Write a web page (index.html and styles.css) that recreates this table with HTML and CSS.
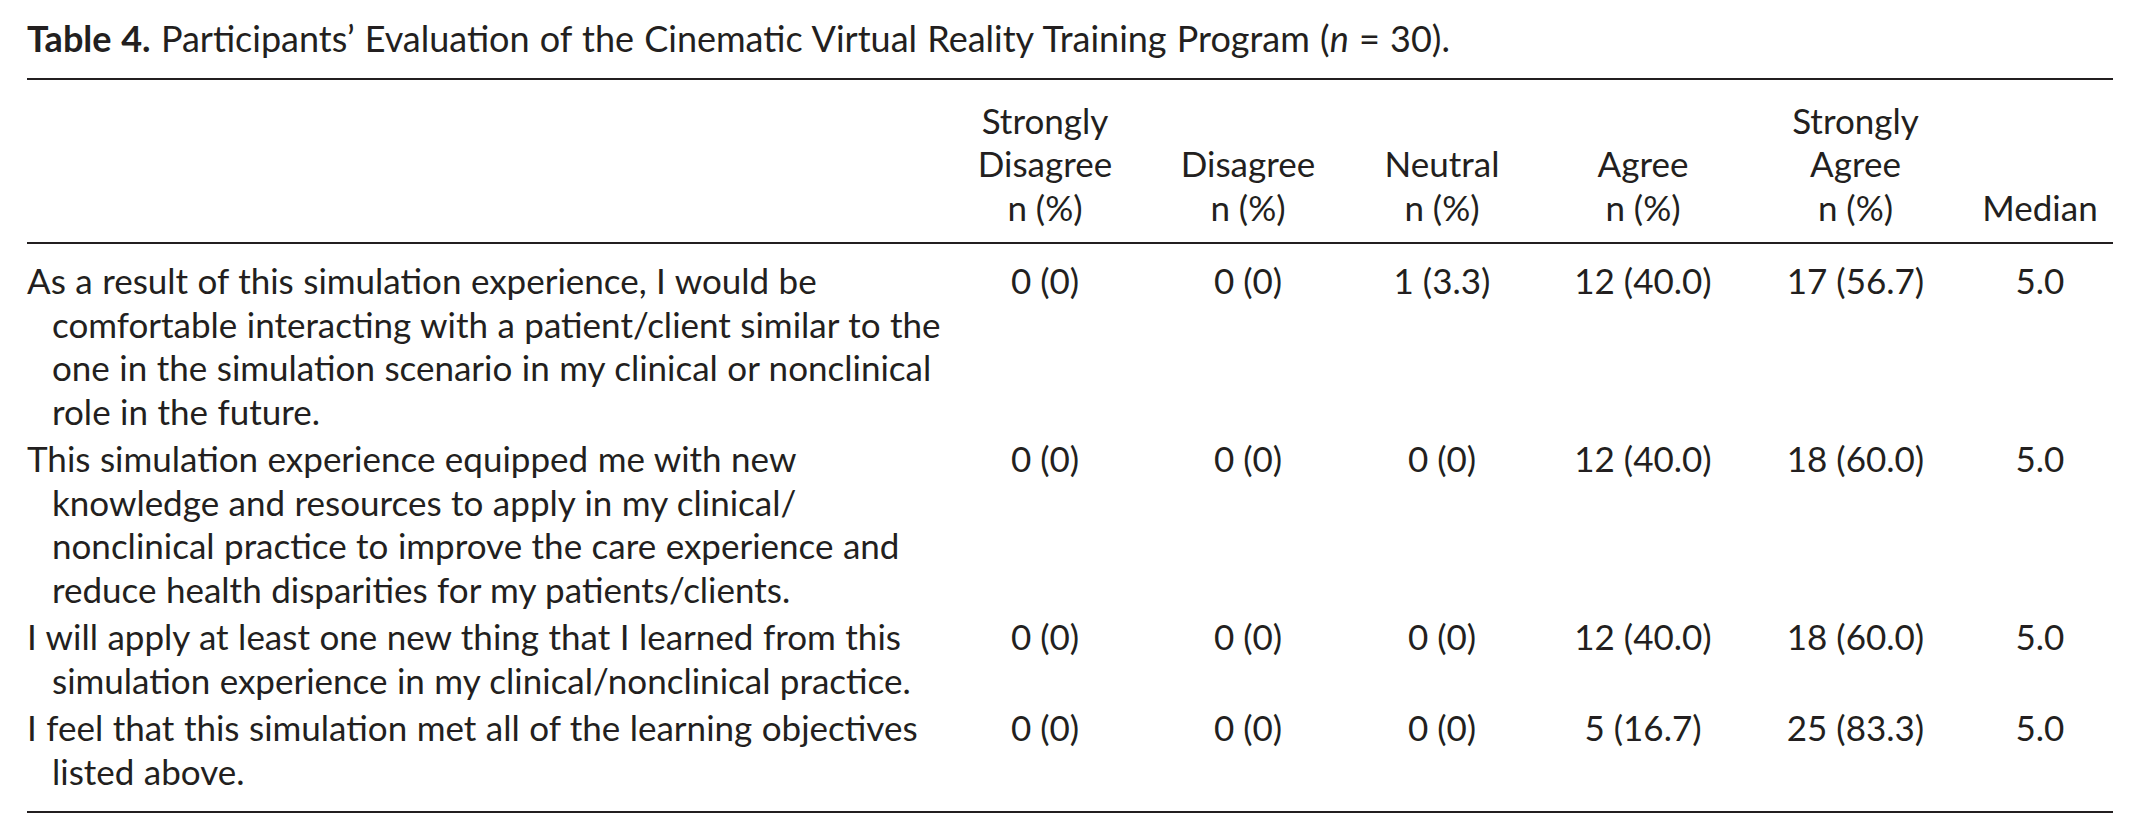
FILE: index.html
```html
<!DOCTYPE html>
<html lang="en">
<head>
<meta charset="utf-8">
<title>Table 4</title>
<link rel="stylesheet" href="styles.css">
</head>
<body>
<div class="page">
  <div class="caption"><span class="label">Table 4.</span> Participants’ Evaluation of the Cinematic Virtual Reality Training Program (<i>n</i> = 30).</div>
  <table class="data">
    <colgroup>
      <col class="c-item">
      <col class="c-sd">
      <col class="c-d">
      <col class="c-n">
      <col class="c-a">
      <col class="c-sa">
      <col class="c-m">
    </colgroup>
    <thead>
      <tr>
        <th class="item"></th>
        <th>Strongly<br>Disagree<br>n (%)</th>
        <th>Disagree<br>n (%)</th>
        <th>Neutral<br>n (%)</th>
        <th>Agree<br>n (%)</th>
        <th>Strongly<br>Agree<br>n (%)</th>
        <th>Median</th>
      </tr>
    </thead>
    <tbody>
      <tr>
        <td class="item">As a result of this simulation experience, I would be<br>comfortable interacting with a patient/client similar to the<br>one in the simulation scenario in my clinical or nonclinical<br>role in the future.</td>
        <td>0 (0)</td>
        <td>0 (0)</td>
        <td>1 (3.3)</td>
        <td>12 (40.0)</td>
        <td>17 (56.7)</td>
        <td>5.0</td>
      </tr>
      <tr>
        <td class="item">This simulation experience equipped me with new<br>knowledge and resources to apply in my clinical/<br>nonclinical practice to improve the care experience and<br>reduce health disparities for my patients/clients.</td>
        <td>0 (0)</td>
        <td>0 (0)</td>
        <td>0 (0)</td>
        <td>12 (40.0)</td>
        <td>18 (60.0)</td>
        <td>5.0</td>
      </tr>
      <tr>
        <td class="item">I will apply at least one new thing that I learned from this<br>simulation experience in my clinical/nonclinical practice.</td>
        <td>0 (0)</td>
        <td>0 (0)</td>
        <td>0 (0)</td>
        <td>12 (40.0)</td>
        <td>18 (60.0)</td>
        <td>5.0</td>
      </tr>
      <tr>
        <td class="item">I feel that this simulation met all of the learning objectives<br>listed above.</td>
        <td>0 (0)</td>
        <td>0 (0)</td>
        <td>0 (0)</td>
        <td>5 (16.7)</td>
        <td>25 (83.3)</td>
        <td>5.0</td>
      </tr>
    </tbody>
  </table>
</div>
</body>
</html>
```

FILE: styles.css
```css
html, body {
  margin: 0;
  padding: 0;
  background: #ffffff;
}

body {
  font-family: Lato, "Liberation Sans", sans-serif;
  color: #231f20;
  font-size: 35px;
  line-height: 43.5px;
}

.page {
  padding: 17px 26px 0 27px;
}

.caption {
  margin: 0 0 17px 0;
  white-space: nowrap;
  font-size: 36px;
  word-spacing: 1px;
}

.caption .label {
  font-weight: 700;
}

.data {
  border-collapse: collapse;
  table-layout: fixed;
  width: 2086px;
}

.c-item { width: 909px; }
.c-sd { width: 218px; }
.c-d { width: 188px; }
.c-n { width: 200px; }
.c-a { width: 202px; }
.c-sa { width: 223px; }
.c-m { width: 146px; }

.data thead tr {
  border-top: 2px solid #231f20;
  border-bottom: 2px solid #231f20;
}

.data th {
  font-weight: 400;
  text-align: center;
  vertical-align: bottom;
  padding: 19px 0 13px 0;
}

.data tbody tr:last-child {
  border-bottom: 2px solid #231f20;
}

.data td {
  text-align: center;
  vertical-align: top;
  padding: 2px 0 2px 0;
  white-space: nowrap;
}

.data tbody tr:first-child td {
  padding-top: 15px;
}

.data tbody tr:last-child td {
  padding-bottom: 18px;
}

.data td.item {
  text-align: left;
  padding-left: 25px;
  text-indent: -25px;
  word-spacing: 0.5px;
}
```
